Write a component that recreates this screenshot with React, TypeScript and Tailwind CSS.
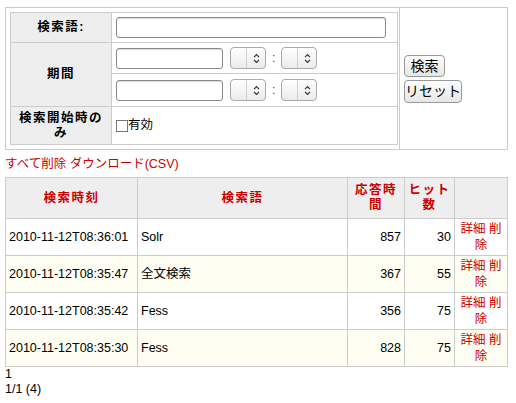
import React from 'react';

const rows = [
  { time: '2010-11-12T08:36:01', term: 'Solr', resp: 857, hits: 30 },
  { time: '2010-11-12T08:35:47', term: '全文検索', resp: 367, hits: 55 },
  { time: '2010-11-12T08:35:42', term: 'Fess', resp: 356, hits: 75 },
  { time: '2010-11-12T08:35:30', term: 'Fess', resp: 828, hits: 75 },
];

function FakeSelect() {
  return (
    <span className="inline-flex h-[22px] w-[36px] items-stretch rounded-[4px] border border-[#aaa] bg-linear-to-b from-white to-[#ebebeb] align-middle">
      <span className="w-[16px] border-r border-[#cfcfcf]" />
      <span className="flex flex-1 items-center justify-center">
        <svg width="7" height="11" viewBox="0 0 7 11">
          <path d="M1 4.2 L3.5 1.6 L6 4.2 M1 6.8 L3.5 9.4 L6 6.8" fill="none" stroke="#333" strokeWidth="1.2" />
        </svg>
      </span>
    </span>
  );
}

function TextBox({ w }: { w: string }) {
  return (
    <input
      type="text"
      className={`${w} h-[21px] rounded-[3px] border border-[#8a8a8a] bg-white align-middle shadow-[inset_0_1px_1px_rgba(0,0,0,0.15)] outline-none`}
    />
  );
}

function DateRow() {
  return (
    <div className="flex items-center">
      <TextBox w="w-[107px]" />
      <span className="ml-[7px]">
        <FakeSelect />
      </span>
      <span className="mx-[6px] text-[#555]">:</span>
      <FakeSelect />
    </div>
  );
}

export default function App() {
  const label = 'border border-[#ccc] bg-[#eee] px-[4px] text-center font-bold tracking-[1.5px]';
  const cell = 'border border-[#ccc] px-[4px] align-middle';
  const th = 'border border-[#ccc] bg-[#eee] px-[3px] text-center font-bold tracking-[1.5px] text-[#cc0000]';
  const td = 'border border-[#ccc] px-[3px] align-middle';

  return (
    <div className="pl-[5px] pt-[7px] font-['Liberation_Sans','Noto_Sans_CJK_JP',sans-serif] text-[12.5px] leading-[15px] text-black">
      <table className="w-[502px] table-fixed border-collapse border border-[#ccc]">
        <colgroup>
          <col className="w-[394px]" />
          <col className="w-[108px]" />
        </colgroup>
        <tbody>
          <tr>
            <td className="border border-[#ccc] p-[4px] pr-[2px] align-middle">
              <table className="w-[387px] table-fixed border-collapse border border-[#ccc]">
                <colgroup>
                  <col className="w-[101px]" />
                  <col className="w-[286px]" />
                </colgroup>
                <tbody>
                  <tr className="h-[30px]">
                    <th className={label}>検索語:</th>
                    <td className={cell}>
                      <TextBox w="w-[270px]" />
                    </td>
                  </tr>
                  <tr className="h-[31px]">
                    <th rowSpan={2} className={label}>
                      期間
                    </th>
                    <td className={cell}>
                      <DateRow />
                    </td>
                  </tr>
                  <tr className="h-[33px]">
                    <td className={cell}>
                      <DateRow />
                    </td>
                  </tr>
                  <tr className="h-[38px]">
                    <th className={label}>検索開始時のみ</th>
                    <td className={cell}>
                      <label className="flex items-center">
                        <span className="inline-block h-[12px] w-[12px] border border-[#777] bg-white" />
                        <span>有効</span>
                      </label>
                    </td>
                  </tr>
                </tbody>
              </table>
            </td>
            <td className="border border-[#ccc] px-[4px] align-middle">
              <div className="flex flex-col items-start gap-[3px]">
                <button className="h-[22px] w-[41px] rounded-[4px] border border-[#999] bg-linear-to-b from-white to-[#e6e6e6] text-[14px] leading-none">
                  検索
                </button>
                <button className="h-[23px] w-[58px] rounded-[4px] border border-[#999] bg-linear-to-b from-white to-[#e6e6e6] text-[14px] leading-none">
                  リセット
                </button>
              </div>
            </td>
          </tr>
        </tbody>
      </table>

      <div className="mt-[6px] mb-[5px] h-[16px] leading-[16px] text-[#cc0000]">
        <a>すべて削除</a> <a>ダウンロード(CSV)</a>
      </div>

      <table className="w-[502px] table-fixed border-collapse border border-[#ccc]">
        <colgroup>
          <col className="w-[132px]" />
          <col className="w-[210px]" />
          <col className="w-[57px]" />
          <col className="w-[50px]" />
          <col className="w-[53px]" />
        </colgroup>
        <thead>
          <tr className="h-[41px]">
            <th className={th}>検索時刻</th>
            <th className={th}>検索語</th>
            <th className={th}>応答時間</th>
            <th className={th}>ヒット数</th>
            <th className={th}></th>
          </tr>
        </thead>
        <tbody>
          {rows.map((r, i) => (
            <tr key={i} className={`h-[37px] ${i % 2 === 1 ? 'bg-[#fefef3]' : 'bg-white'}`}>
              <td className={td}>{r.time}</td>
              <td className={td}>{r.term}</td>
              <td className={`${td} text-right`}>{r.resp}</td>
              <td className={`${td} text-right`}>{r.hits}</td>
              <td className={`${td} text-center leading-[16px] text-[#cc0000]`}>
                <a>詳細</a> <a>削除</a>
              </td>
            </tr>
          ))}
        </tbody>
      </table>

      <div>1</div>
      <div>1/1 (4)</div>
    </div>
  );
}
